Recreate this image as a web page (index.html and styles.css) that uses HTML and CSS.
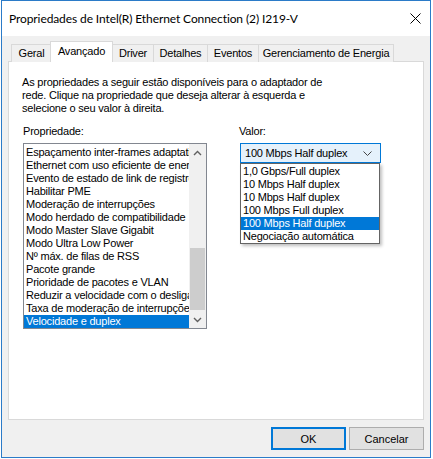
FILE: index.html
```html
<!DOCTYPE html>
<html lang="pt">
<head>
<meta charset="utf-8">
<title>Propriedades</title>
<link rel="stylesheet" href="styles.css">
</head>
<body>
<div class="window">
  <div class="titlebar">
    <span class="title">Propriedades de Intel(R) Ethernet Connection (2) I219-V</span>
    <span class="close"><svg width="11" height="11" viewBox="0 0 11 11"><path d="M0.5 0.5 L10.5 10.5 M10.5 0.5 L0.5 10.5" stroke="#000" stroke-width="1" fill="none"/></svg></span>
  </div>
  <div class="content">
    <div class="tabs">
      <div class="tab">Geral</div>
      <div class="tab active">Avançado</div>
      <div class="tab">Driver</div>
      <div class="tab">Detalhes</div>
      <div class="tab">Eventos</div>
      <div class="tab">Gerenciamento de Energia</div>
    </div>
    <div class="panel">
      <p class="desc">As propriedades a seguir estão disponíveis para o adaptador de<br>rede. Clique na propriedade que deseja alterar à esquerda e<br>selecione o seu valor à direita.</p>
      <div class="columns">
        <div class="col-left">
          <div class="label">Propriedade:</div>
          <div class="listbox">
            <div class="items">
              <div class="item">Espaçamento inter-frames adaptativo</div>
              <div class="item">Ethernet com uso eficiente de energia</div>
              <div class="item">Evento de estado de link de registro</div>
              <div class="item">Habilitar PME</div>
              <div class="item">Moderação de interrupções</div>
              <div class="item">Modo herdado de compatibilidade</div>
              <div class="item">Modo Master Slave Gigabit</div>
              <div class="item">Modo Ultra Low Power</div>
              <div class="item">Nº máx. de filas de RSS</div>
              <div class="item">Pacote grande</div>
              <div class="item">Prioridade de pacotes e VLAN</div>
              <div class="item">Reduzir a velocidade com o desligamento</div>
              <div class="item">Taxa de moderação de interrupções</div>
              <div class="item selected">Velocidade e duplex</div>
            </div>
            <div class="scrollbar">
              <div class="sb-arrow"><svg width="9" height="6" viewBox="0 0 9 6"><path d="M1 5 L4.5 1.5 L8 5" stroke="#606060" stroke-width="1.4" fill="none"/></svg></div>
              <div class="sb-track"><div class="sb-thumb"></div></div>
              <div class="sb-arrow"><svg width="9" height="6" viewBox="0 0 9 6"><path d="M1 1 L4.5 4.5 L8 1" stroke="#606060" stroke-width="1.4" fill="none"/></svg></div>
            </div>
          </div>
        </div>
        <div class="col-right">
          <div class="label">Valor:</div>
          <div class="combo-wrap">
            <div class="combo">
              <span>100 Mbps Half duplex</span>
              <svg width="9" height="5" viewBox="0 0 9 5"><path d="M0.5 0.5 L4.5 4.5 L8.5 0.5" stroke="#444" stroke-width="1" fill="none"/></svg>
            </div>
            <div class="dropdown">
              <div class="opt">1,0 Gbps/Full duplex</div>
              <div class="opt">10 Mbps Half duplex</div>
              <div class="opt">10 Mbps Half duplex</div>
              <div class="opt">100 Mbps Full duplex</div>
              <div class="opt selected">100 Mbps Half duplex</div>
              <div class="opt">Negociação automática</div>
            </div>
          </div>
        </div>
      </div>
    </div>
    <div class="buttons">
      <button class="btn default">OK</button>
      <button class="btn">Cancelar</button>
    </div>
  </div>
</div>
</body>
</html>
```
FILE: styles.css
```css
* { box-sizing: border-box; }
html, body { margin: 0; padding: 0; }
body {
  width: 433px;
  height: 459px;
  background: #ffffff;
  font-family: "Liberation Sans", Arial, sans-serif;
  font-size: 11px;
  letter-spacing: -0.2px;
  color: #000;
}
.window {
  margin-left: 1px;
  width: 430px;
  height: 458px;
  border: 1px solid #2b7bc8;
  display: flex;
  flex-direction: column;
  background: #f0f0f0;
}
.titlebar {
  height: 35px;
  background: #fff;
  display: flex;
  align-items: center;
  justify-content: space-between;
  padding: 0 8px 0 7px;
  flex-shrink: 0;
}
.title {
  font-family: Lato, "Liberation Sans", sans-serif;
  font-size: 12px;
  letter-spacing: -0.1px;
  color: #000;
  padding-bottom: 1px;
}
.close { display: flex; padding-right: 1px; }
.content {
  flex: 1;
  display: flex;
  flex-direction: column;
  padding: 6px 6px 0 6px;
}
.tabs {
  display: flex;
  align-items: flex-end;
  height: 20px;
  padding-left: 3px;
  position: relative;
  z-index: 1;
  margin-bottom: -1px;
}
.tab {
  height: 18px;
  border: 1px solid #d9d9d9;
  border-bottom: none;
  border-right: none;
  background: #f0f0f0;
  text-align: center;
  line-height: 17px;
  font-size: 11px;
}
.tab:nth-child(1) { width: 40px; }
.tab:nth-child(3) { width: 40px; border-left: none; }
.tab:nth-child(4) { width: 54px; }
.tab:nth-child(5) { width: 51px; }
.tab:nth-child(6) { width: 136px; border-right: 1px solid #d9d9d9; }
.tab.active {
  width: 63px;
  height: 21px;
  background: #fff;
  border-right: 1px solid #d9d9d9;
  line-height: 18px;
  margin-left: -1px;
}
.panel {
  height: 359px;
  background: #fff;
  border: 1px solid #d9d9d9;
  padding: 14px 14px 0 13px;
  flex-shrink: 0;
}
.desc {
  margin: 0;
  line-height: 13px;
}
.columns {
  display: flex;
  margin-top: 10px;
}
.col-left { width: 217px; padding-left: 1px; }
.col-right { flex: 1; }
.label { line-height: 13px; height: 13px; margin-bottom: 5px; }
.listbox {
  width: 184px;
  height: 186px;
  border: 1px solid #828790;
  display: flex;
}
.items {
  flex: 1;
  overflow: hidden;
  padding-top: 2px;
}
.item {
  height: 13px;
  line-height: 13px;
  padding-left: 2px;
  white-space: nowrap;
  overflow: hidden;
}
.item.selected { background: #0078d7; color: #fff; }
.scrollbar {
  width: 17px;
  display: flex;
  flex-direction: column;
  background: #f0f0f0;
}
.sb-arrow {
  height: 17px;
  display: flex;
  align-items: center;
  justify-content: center;
}
.sb-track {
  flex: 1;
  display: flex;
  flex-direction: column;
  justify-content: flex-end;
  padding: 0 1px 1px 1px;
}
.sb-thumb {
  height: 62px;
  background: #cdcdcd;
}
.combo-wrap { position: relative; width: 141px; margin-left: 1px; }
.combo {
  height: 20px;
  border: 1px solid #0078d7;
  background: #e5f1fb;
  display: flex;
  align-items: center;
  justify-content: space-between;
  padding: 0 8px 0 4px;
}
.dropdown {
  position: absolute;
  top: 20px;
  left: 0;
  width: 140px;
  background: #fff;
  border: 1px solid #646464;
  box-shadow: 2px 2px 3px rgba(0,0,0,0.25);
  padding: 1px 0 0 0;
}
.opt {
  height: 13px;
  line-height: 13px;
  padding-left: 2px;
  white-space: nowrap;
}
.opt.selected { background: #0078d7; color: #fff; }
.buttons {
  display: flex;
  justify-content: flex-end;
  gap: 3px;
  padding-top: 7px;
  padding-right: 0;
}
.btn {
  width: 75px;
  height: 23px;
  font-family: "Liberation Sans", Arial, sans-serif;
  font-size: 11px;
  background: #e1e1e1;
  border: 1px solid #adadad;
  padding: 0;
  color: #000;
}
.btn.default { border: 2px solid #0078d7; }
```
